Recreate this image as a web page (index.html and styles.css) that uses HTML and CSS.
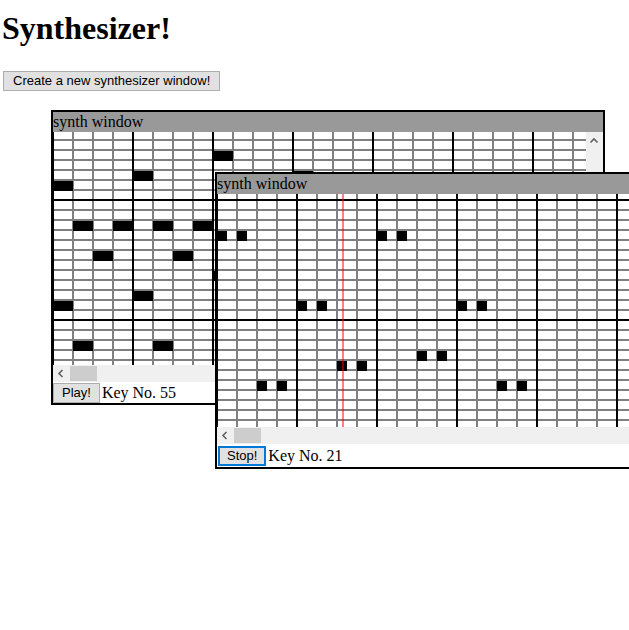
FILE: index.html
```html
<!DOCTYPE html>
<html>
<head>
<meta charset="utf-8">
<title>Synthesizer!</title>
<link rel="stylesheet" href="styles.css">
</head>
<body>
<div class="page">
  <h1 class="heading">Synthesizer!</h1>
  <div class="toolbar"><button class="btn btn-create">Create a new synthesizer window!</button></div>
</div>

<section class="win win-a">
  <div class="win-title">synth window</div>
  <div class="scroller">
    <svg class="roll roll-a" width="533" height="233" viewBox="0 0 533 233">
      <g class="notes">
        <rect x="0" y="49" width="20" height="10"/>
        <rect x="80" y="39" width="20" height="10"/>
        <rect x="20" y="89" width="20" height="10"/>
        <rect x="60" y="89" width="20" height="10"/>
        <rect x="100" y="89" width="20" height="10"/>
        <rect x="140" y="89" width="20" height="10"/>
        <rect x="40" y="119" width="20" height="10"/>
        <rect x="120" y="119" width="20" height="10"/>
        <rect x="80" y="159" width="20" height="10"/>
        <rect x="0" y="169" width="20" height="10"/>
        <rect x="20" y="209" width="20" height="10"/>
        <rect x="100" y="209" width="20" height="10"/>
        <rect x="160" y="19" width="20" height="10"/>
        <rect x="160" y="139" width="20" height="10"/>
        <rect x="240" y="39" width="20" height="10"/>
      </g>
    </svg>
    <div class="vbar">
      <div class="arrow-box"><svg width="17" height="17" viewBox="0 0 17 17"><polyline class="chev" points="4.5,10.5 8,7 11.5,10.5"/></svg></div>
      <div class="vthumb"></div>
    </div>
    <div class="hbar">
      <div class="arrow-box"><svg width="17" height="17" viewBox="0 0 17 17"><polyline class="chev" points="9.5,5 6,8.5 9.5,12"/></svg></div>
      <div class="hthumb"></div>
    </div>
    <div class="corner"></div>
  </div>
  <div class="controls"><button class="btn btn-small">Play!</button><span class="key">Key No. 55</span></div>
</section>

<section class="win win-b">
  <div class="win-title">synth window</div>
  <div class="scroller">
    <svg class="roll roll-b" width="533" height="233" viewBox="0 0 533 233">
      <g class="notes">
        <rect x="0" y="37" width="10" height="10"/>
        <rect x="20" y="37" width="10" height="10"/>
        <rect x="160" y="37" width="10" height="10"/>
        <rect x="180" y="37" width="10" height="10"/>
        <rect x="80" y="107" width="10" height="10"/>
        <rect x="100" y="107" width="10" height="10"/>
        <rect x="120" y="167" width="10" height="10"/>
        <rect x="140" y="167" width="10" height="10"/>
        <rect x="40" y="187" width="10" height="10"/>
        <rect x="60" y="187" width="10" height="10"/>
        <rect x="200" y="157" width="10" height="10"/>
        <rect x="220" y="157" width="10" height="10"/>
        <rect x="240" y="107" width="10" height="10"/>
        <rect x="260" y="107" width="10" height="10"/>
        <rect x="280" y="187" width="10" height="10"/>
        <rect x="300" y="187" width="10" height="10"/>
      </g>
      <rect class="playhead" x="125" y="0" width="2" height="233"/>
    </svg>
    <div class="vbar">
      <div class="arrow-box"><svg width="17" height="17" viewBox="0 0 17 17"><polyline class="chev" points="4.5,10.5 8,7 11.5,10.5"/></svg></div>
      <div class="vthumb"></div>
    </div>
    <div class="hbar">
      <div class="arrow-box"><svg width="17" height="17" viewBox="0 0 17 17"><polyline class="chev" points="9.5,5 6,8.5 9.5,12"/></svg></div>
      <div class="hthumb"></div>
    </div>
    <div class="corner"></div>
  </div>
  <div class="controls controls-active"><button class="btn btn-small btn-focus">Stop!</button><span class="key">Key No. 21</span></div>
</section>
</body>
</html>
```

FILE: styles.css
```css
html, body {
  margin: 0;
  padding: 0;
  overflow: hidden;
  background: #fff;
  color: #000;
  font-family: "Liberation Serif", "Times New Roman", serif;
}

.page {
  padding-top: 10px;
}

.heading {
  margin: 0 0 0 2px;
  font-size: 32px;
  line-height: 37px;
  font-weight: bold;
}

.toolbar {
  margin-top: 24px;
  padding-left: 3px;
}

.btn {
  font-family: "Liberation Sans", Arial, sans-serif;
  font-size: 13px;
  line-height: 16px;
  color: #000;
  background: #e1e1e1;
  border: 1px solid #adadad;
  border-radius: 0;
  padding: 1px 8px;
  margin: 0;
}

.btn-create {
  display: block;
  padding: 1px 9px;
}

.btn-focus {
  border: 2px solid #0078d7;
  padding: 0 7px;
  margin-left: 1px;
}

.win {
  position: absolute;
  width: 550px;
  border: 2px solid #000;
  background: #fff;
}

.win-a {
  left: 51px;
  top: 110px;
}

.win-b {
  left: 215px;
  top: 172px;
}

.win-title {
  height: 20px;
  line-height: 20px;
  font-size: 16px;
  background: #999;
  white-space: nowrap;
}

.scroller {
  display: grid;
  grid-template-columns: 533px 17px;
  grid-template-rows: 233px 17px;
}

.roll {
  display: block;
  background-color: #fff;
  background-image:
    linear-gradient(to right, #000 2px, transparent 2px),
    linear-gradient(to bottom, #000 2px, transparent 2px),
    linear-gradient(to right, #808080 2px, transparent 2px),
    linear-gradient(to bottom, #808080 2px, transparent 2px);
  background-size: 80px 100%, 100% 120px, 20px 100%, 100% 10px;
  background-repeat: repeat-x, repeat-y, repeat-x, repeat-y;
}

.roll-a {
  background-position: -1px 0, 0 67px, -1px 0, 0 7px;
}

.roll-b {
  background-position: -1px 0, 0 5px, -1px 0, 0 5px;
}

.notes rect {
  fill: #000;
}

.playhead {
  fill: rgba(255, 0, 0, 0.5);
}

.vbar {
  background: #f0f0f0;
  display: flex;
  flex-direction: column;
}

.vthumb {
  margin: 150px 1px 0;
  height: 40px;
  background: #cdcdcd;
}

.hbar {
  background: #f0f0f0;
  display: flex;
  align-items: center;
}

.arrow-box {
  width: 17px;
  height: 17px;
  flex: none;
}

.arrow-box svg {
  display: block;
}

.chev {
  fill: none;
  stroke: #606060;
  stroke-width: 1.6;
}

.hthumb {
  width: 27px;
  height: 15px;
  background: #cdcdcd;
}

.corner {
  background: #dcdcdc;
}

.controls {
  display: flex;
  align-items: center;
  gap: 2px;
  height: 21px;
}

.controls-active {
  height: 23px;
}

.key {
  font-size: 16px;
  white-space: nowrap;
}
```
